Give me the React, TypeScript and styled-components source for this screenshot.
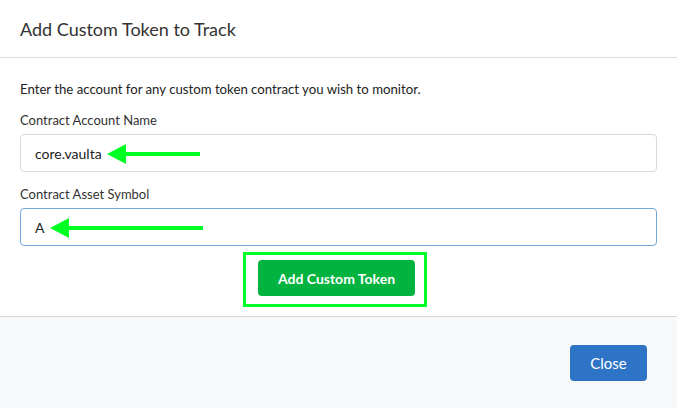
import React from 'react'
import styled, { createGlobalStyle } from 'styled-components'

const GlobalStyle = createGlobalStyle`
  html, body {
    margin: 0;
    padding: 0;
    background: #ffffff;
  }
  body {
    font-family: Lato, 'Open Sans', 'Liberation Sans', sans-serif;
    color: #222;
  }
`

const Modal = styled.div`
  width: 677px;
  height: 408px;
  display: flex;
  flex-direction: column;
  background: #fff;
  overflow: hidden;
`

const Header = styled.div`
  height: 57px;
  display: flex;
  align-items: center;
  padding: 0 20px;
  border-bottom: 1px solid #dcdcdc;
`

const Title = styled.h2`
  margin: 0;
  font-size: 18px;
  font-weight: 400;
  color: #333;
`

const Body = styled.div`
  padding: 22px 20px 9px;
  display: flex;
  flex-direction: column;
  border-bottom: 1px solid #d6d7d9;
`

const Description = styled.p`
  margin: 0 0 13px;
  font-size: 13.2px;
  line-height: 18px;
  color: #222;
`

const Label = styled.label`
  display: block;
  font-size: 13px;
  line-height: 18px;
  color: #333;
  margin-bottom: 5px;
`

const Field = styled.div<{ $gap?: number }>`
  position: relative;
  margin-bottom: ${(p) => p.$gap ?? 0}px;
`

const Input = styled.div<{ $focused?: boolean }>`
  height: 38px;
  box-sizing: border-box;
  border: 1px solid ${(p) => (p.$focused ? '#75a8da' : '#d9d9d9')};
  border-radius: 4px;
  padding: 0 14px;
  display: flex;
  align-items: center;
  font-size: 14px;
  color: #222;
  background: #fff;
`

const Arrow = styled.svg<{ $left: number }>`
  position: absolute;
  left: ${(p) => p.$left}px;
  top: 9px;
  pointer-events: none;
`

const Actions = styled.div`
  display: flex;
  justify-content: center;
  margin-top: 6px;
`

const Highlight = styled.div`
  border: 3px solid #00ff2a;
  padding: 5px 9px 8px 12px;
  margin-right: 7px;
`

const Button = styled.button<{ $tone: 'green' | 'blue' }>`
  height: 36px;
  border: 0;
  border-radius: 4px;
  padding: 0 20px;
  font-family: inherit;
  font-size: 14px;
  font-weight: 700;
  color: #fff;
  background: ${(p) => (p.$tone === 'green' ? '#03b33f' : '#2e74c6')};
  cursor: pointer;
`

const Footer = styled.div`
  flex: 1;
  background: #f7f8fa;
  display: flex;
  justify-content: flex-end;
  align-items: flex-start;
  padding: 28px 30px 0 0;
`

const CloseButton = styled(Button)`
  width: 77px;
  font-weight: 400;
  font-size: 15px;
  padding: 0;
`

const GreenArrow = ({ left, length }: { left: number; length: number }) => (
  <Arrow $left={left} width={length} height={22} viewBox={`0 0 ${length} 22`}>
    <polygon points="0,11 19,1 19,21" fill="#00ff22" />
    <rect x={18} y={9} width={length - 18} height={4} fill="#00ff22" />
  </Arrow>
)

export default function App() {
  return (
    <>
      <GlobalStyle />
      <Modal>
        <Header>
          <Title>Add Custom Token to Track</Title>
        </Header>
        <Body>
          <Description>Enter the account for any custom token contract you wish to monitor.</Description>
          <Label>Contract Account Name</Label>
          <Field $gap={13}>
            <Input>core.vaulta</Input>
            <GreenArrow left={87} length={93} />
          </Field>
          <Label>Contract Asset Symbol</Label>
          <Field>
            <Input $focused>A</Input>
            <GreenArrow left={30} length={153} />
          </Field>
          <Actions>
            <Highlight>
              <Button $tone="green">Add Custom Token</Button>
            </Highlight>
          </Actions>
        </Body>
        <Footer>
          <CloseButton $tone="blue">Close</CloseButton>
        </Footer>
      </Modal>
    </>
  )
}
